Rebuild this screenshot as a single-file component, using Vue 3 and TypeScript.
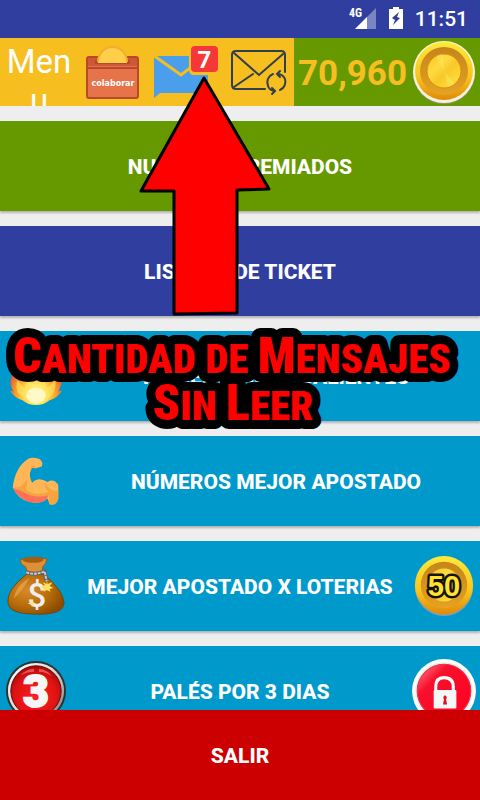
<script setup lang="ts">
interface Entry {
  label: string
  tone: 'green' | 'indigo' | 'blue'
  left?: 'fire' | 'arm' | 'bag' | 'three'
  right?: 'fifty' | 'lock'
}

const entries: Entry[] = [
  { label: 'NUMEROS PREMIADOS', tone: 'green' },
  { label: 'LISTADO DE TICKET', tone: 'indigo' },
  { label: 'NÚMEROS MÁS CALIENTES', tone: 'blue', left: 'fire' },
  { label: 'NÚMEROS MEJOR APOSTADO', tone: 'blue', left: 'arm' },
  { label: 'MEJOR APOSTADO X LOTERIAS', tone: 'blue', left: 'bag', right: 'fifty' },
  { label: 'PALÉS POR 3 DIAS', tone: 'blue', left: 'three', right: 'lock' },
]

const unread = 7
const coins = '70,960'
</script>

<template>
  <div class="screen">
    <svg class="defs" aria-hidden="true">
      <defs>
        <linearGradient id="rim" x1="0" y1="0" x2="0" y2="1">
          <stop offset="0" stop-color="#ffe93a" /><stop offset=".6" stop-color="#f8c51c" /><stop offset="1" stop-color="#e08a08" />
        </linearGradient>
        <linearGradient id="groove" x1="0" y1="0" x2="0" y2="1">
          <stop offset="0" stop-color="#c5851a" /><stop offset="1" stop-color="#e6a222" />
        </linearGradient>
        <linearGradient id="face" x1="0" y1="0" x2="1" y2="1">
          <stop offset="0" stop-color="#f8c322" /><stop offset=".35" stop-color="#ffdb40" /><stop offset=".55" stop-color="#f7c828" /><stop offset=".8" stop-color="#ffd938" /><stop offset="1" stop-color="#f3b61c" />
        </linearGradient>
        <radialGradient id="flame" cx=".5" cy=".82" r=".6">
          <stop offset="0" stop-color="#fffde0" /><stop offset=".25" stop-color="#fff07a" /><stop offset=".55" stop-color="#fdb52e" /><stop offset="1" stop-color="#e8492a" />
        </radialGradient>
        <radialGradient id="leather" cx=".35" cy=".4" r=".7">
          <stop offset="0" stop-color="#d98a2c" /><stop offset=".55" stop-color="#b86e0a" /><stop offset="1" stop-color="#8a4a00" />
        </radialGradient>
        <radialGradient id="ruby" cx=".5" cy=".6" r=".6">
          <stop offset="0" stop-color="#ff2020" /><stop offset=".7" stop-color="#e01212" /><stop offset="1" stop-color="#a80808" />
        </radialGradient>
        <linearGradient id="steel" x1="0" y1="0" x2="1" y2="1">
          <stop offset="0" stop-color="#ffffff" /><stop offset=".5" stop-color="#d8d8d8" /><stop offset="1" stop-color="#777777" />
        </linearGradient>
        <linearGradient id="cherry" x1="0" y1="0" x2="1" y2="1">
          <stop offset="0" stop-color="#ff8a96" /><stop offset=".3" stop-color="#f8102c" /><stop offset="1" stop-color="#ff0020" />
        </linearGradient>
      </defs>
    </svg>

    <div class="status">
      <svg class="signal" viewBox="0 0 28 24" aria-hidden="true">
        <path d="M27 3V24H6Z" fill="#7c85c3" />
        <path d="M18 12V24H6Z" fill="#fff" />
        <text x="0" y="12" class="network">4G</text>
      </svg>
      <svg class="battery" viewBox="0 0 14 22" aria-hidden="true">
        <path d="M4 0H10V2H14V22H0V2H4Z" fill="#fff" />
        <path d="M10 5L3 11L6 13L4 18L11 11L8 10Z" fill="#303f9f" />
      </svg>
      <time class="clock">11:51</time>
    </div>

    <header class="bar">
      <button class="menu" type="button">Menu</button>
      <button class="tool" type="button" aria-label="colaborar">
        <svg viewBox="0 1 60 56" class="toolicon">
          <rect x="4" y="14" width="51" height="41" rx="2" fill="#e67349" stroke="#b7492b" stroke-width="2" />
          <path d="M5 15H54V23H5Z" fill="#cf5638" />
          <path d="M4 25H55" stroke="#b7492b" stroke-width="2" />
          <path d="M13 17V20H46V17" fill="none" stroke="#b7492b" stroke-width="2" />
          <path d="M15 20A14.500 16 0 0 1 44 20Z" fill="#ffce4b" />
          <path d="M15 19A14.500 15 0 0 1 44 19" fill="none" stroke="#f2ae2b" stroke-width="2" />
          <text x="30" y="43" class="collab">colaborar</text>
        </svg>
      </button>
      <button class="tool wide" type="button" aria-label="Mensajes sin leer">
        <svg viewBox="0 0 70 60" class="mail">
          <path d="M3 14H57V51H9L3 56Z" fill="#4a9eeb" />
          <path d="M2 13L30 33L47 20" fill="none" stroke="#f7be20" stroke-width="3" />
          <path d="M38 8H70V33H43Q38 33 38 28Z" fill="#f7be20" />
        </svg>
        <span class="badge">{{ unread }}</span>
      </button>
      <button class="tool" type="button" aria-label="Actualizar mensajes">
        <svg viewBox="0 0 60 50" class="toolicon" fill="none" stroke="#2f3f4d" stroke-width="2" stroke-linecap="round">
          <path d="M56 25V8Q56 4 52 4H7Q3 4 3 8V38Q3 42 7 42H36" />
          <path d="M5 6L30 28L54 7M5 40L24 27" />
          <path d="M44 27A9 9 0 0 0 39 39Q41 44 46 44M43 41L46 44L43 47" />
          <path d="M51 43A9 9 0 0 0 56 32Q54 27 48 27M51 24L48 27L51 30" />
        </svg>
      </button>
      <div class="score">
        <span class="coins">{{ coins }}</span>
        <svg class="coin" viewBox="0 0 64 64" aria-hidden="true">
          <circle cx="32" cy="33" r="31" fill="#9b9270" />
          <circle cx="32" cy="32" r="31" fill="#f5f2df" />
          <circle cx="32" cy="31" r="29" fill="url(#rim)" />
          <circle cx="32" cy="31" r="24" fill="url(#groove)" />
          <circle cx="32" cy="31" r="17" fill="url(#face)" stroke="#d58d12" />
          <path d="M32 31L24 16A17 17 0 0 1 31 14ZM32 31L43 44A17 17 0 0 1 36 47Z" fill="#fff07a" opacity=".3" />
        </svg>
      </div>
    </header>

    <main class="list">
      <button v-for="e in entries" :key="e.label" type="button" class="entry" :class="e.tone">
        <span v-if="e.left" class="side">
          <svg v-if="e.left === 'fire'" viewBox="0 0 64 64">
            <path d="M30 3Q42 14 42 24Q46 20 46 14Q60 28 59 36Q58 43 55 48L59 47Q54 55 46 57Q40 62 32 62Q24 62 18 57Q10 55 5 47L9 48Q5 43 6 36Q8 24 16 18Q17 26 22 26Q28 18 30 3Z" fill="url(#flame)" />
            <path d="M14 50Q10 43 13 36L20 45L24 34L31 44L40 33L43 44L52 37Q53 44 49 51Q42 60 32 60Q21 60 14 50Z" fill="#ffe760" opacity=".6" />
            <ellipse cx="32" cy="52" rx="10" ry="8" fill="#fffde6" opacity=".7" />
          </svg>
          <svg v-else-if="e.left === 'arm'" viewBox="0 0 64 64">
            <path d="M24 9Q28 7 35 9Q40 12 38 17L31 19Q28 17 27 20Q24 26 28 34Q34 27 44 33Q50 29 55 36V50Q53 58 46 56L44 50Q35 57 24 53Q14 51 8 39Q10 18 24 9Z" fill="#ffb657" />
            <path d="M8 39Q17 42 24 45Q36 50 45 46L43 51Q34 57 23 53Q13 49 8 39Z" fill="#ff7058" />
            <path d="M8 38Q16 41 22 31Q24 37 21 40Q31 49 45 43Q40 38 41 33Q47 44 55 42V50Q53 58 46 56L45 47Q30 50 22 45Z" fill="#f5a440" />
            <path d="M27 20Q29 15 31 18" fill="none" stroke="#e98c2e" />
          </svg>
          <svg v-else-if="e.left === 'bag'" viewBox="0 0 64 64">
            <path d="M22 20Q2 36 3 48Q3 61 31 61Q61 62 61 49Q59 35 40 20Z" fill="url(#leather)" stroke="#7b4302" />
            <path d="M16 5Q27 0 43 4Q43 9 39 12L38 19H24L21 12Q16 10 16 5Z" fill="#dd9134" stroke="#9a5a0c" />
            <ellipse cx="29" cy="5" rx="11" ry="3" fill="#a55d12" />
            <path d="M20 27Q11 34 9 45Q19 36 25 24Z" fill="#eaa64c" opacity=".7" />
            <path d="M22 18Q31 21 41 17L43 27" fill="none" stroke="#5d6672" stroke-width="4" />
            <path d="M22 18Q31 21 41 17L43 27" fill="none" stroke="#c7cbd0" stroke-width="2" stroke-dasharray="3 1" />
            <text x="33" y="54" class="dollar">$</text>
            <path d="M43 26L44 30L49 28L46 32L50 34L46 35L47 38L43 36L40 38L40 35L37 33L41 31L39 28L43 30Z" fill="#ffe060" />
            <path d="M28 46L29 49L32 50L29 51L28 54L27 51L23 50L27 49Z" fill="#ffe87a" />
          </svg>
          <svg v-else viewBox="0 0 64 64">
            <circle cx="32" cy="32" r="31" fill="#30302f" />
            <circle cx="32" cy="32" r="29" fill="url(#steel)" />
            <circle cx="32" cy="32" r="26" fill="url(#ruby)" stroke="#541010" />
            <path d="M16 16Q22 9 30 9V12Q22 12 16 16ZM35 9Q44 10 49 17Q42 12 35 12Z" fill="#ff8080" opacity=".6" />
            <text x="32" y="48" class="three">3</text>
          </svg>
        </span>
        <span class="label">{{ e.label }}</span>
        <span v-if="e.right" class="side">
          <svg v-if="e.right === 'fifty'" viewBox="0 0 64 64">
            <circle cx="32" cy="33" r="30" fill="#8f9a9f" />
            <circle cx="32" cy="31" r="30" fill="url(#rim)" />
            <circle cx="32" cy="31" r="24" fill="url(#groove)" />
            <circle cx="32" cy="31" r="17" fill="url(#face)" />
            <text x="32" y="42" class="fifty">50</text>
          </svg>
          <svg v-else viewBox="0 0 64 64" class="big">
            <circle cx="32" cy="32" r="31" fill="#fff" />
            <circle cx="32" cy="32" r="28" fill="#dff1f2" />
            <circle cx="32" cy="32" r="26" fill="url(#cherry)" stroke="#ef3048" />
            <path d="M24 31V28Q24 19 32 19Q41 19 41 28V31" fill="none" stroke="#fff" stroke-width="3" />
            <rect x="22" y="31" width="22" height="18" rx="1" fill="#f6f8f8" />
            <path d="M33 36A2.500 2.500 0 0 1 34 40L35 45H31L32 40A2.500 2.500 0 0 1 33 36Z" fill="#e01028" />
          </svg>
        </span>
      </button>
    </main>

    <button class="exit" type="button">SALIR</button>

    <svg class="callout" viewBox="0 0 480 440">
      <path d="M204 78L269 189L237 190V313L174 314V191L141 191Z" fill="#f00" stroke="#000" stroke-width="3" stroke-linejoin="round" />
      <use href="#caption" class="outline" />
      <g id="caption">
        <text x="232" y="373" class="caption"><tspan class="cap">C</tspan>ANTIDAD DE <tspan class="cap">M</tspan>ENSAJES</text>
        <text x="233" y="420" class="caption"><tspan class="cap">S</tspan>IN <tspan class="cap">L</tspan>EER</text>
      </g>
    </svg>
  </div>
</template>

<style>
body {
  margin: 0;
}
</style>

<style scoped>
.screen {
  position: relative;
  display: flex;
  flex-direction: column;
  height: 100vh;
  overflow: hidden;
  background: #eee;
  font-family: Roboto, "Liberation Sans", sans-serif;
}
.defs {
  position: absolute;
  width: 0;
  height: 0;
}
button {
  border: 0;
  margin: 0;
  padding: 0;
  background: none;
  font-family: inherit;
  color: #fff;
}
svg {
  display: block;
}
.status {
  flex: none;
  display: flex;
  align-items: center;
  justify-content: flex-end;
  height: 38px;
  padding: 0 12px;
  background: #303f9f;
  color: #fff;
}
.signal {
  width: 28px;
  height: 24px;
  margin-right: 12px;
  margin-bottom: 4px;
}
.network {
  font: 700 12px "Roboto Condensed", Roboto, sans-serif;
  fill: #fff;
}
.battery {
  width: 14px;
  height: 22px;
  margin-right: 12px;
  margin-bottom: 2px;
}
.clock {
  font-size: 21px;
  font-weight: 500;
  line-height: 40px;
}
.bar {
  flex: none;
  display: flex;
  height: 68px;
  background: #f7be20;
}
.menu {
  flex: none;
  width: 78px;
  padding: 4px;
  overflow: hidden;
  display: flex;
  align-items: flex-start;
  justify-content: center;
  font-size: 33px;
  line-height: 39px;
  word-break: break-all;
}
.tool {
  flex: 1 1 70px;
  position: relative;
  display: flex;
  align-items: center;
  justify-content: center;
}
.tool.wide {
  flex-basis: 76px;
}
.toolicon {
  width: 60px;
  height: 56px;
}
.collab {
  font: 700 8px "DejaVu Sans", sans-serif;
  fill: #fff;
  text-anchor: middle;
}
.mail {
  width: 70px;
  height: 60px;
}
.badge {
  position: absolute;
  top: 8px;
  right: 6px;
  width: 27px;
  height: 26px;
  border-radius: 4px;
  background: #f73838;
  font-size: 24px;
  font-weight: 700;
  line-height: 28px;
  text-align: center;
}
.score {
  flex: none;
  display: flex;
  align-items: center;
  justify-content: space-between;
  width: 186px;
  padding: 0 4px;
  box-sizing: border-box;
  background: #690;
}
.coins {
  color: #f7be20;
  font-size: 35px;
  font-weight: 700;
  padding-top: 2px;
}
.coin {
  width: 64px;
  height: 64px;
}
.list {
  flex: 1;
  min-height: 0;
  display: flex;
  flex-direction: column;
  gap: 15px;
  padding-top: 15px;
  overflow: hidden;
}
.entry {
  flex: none;
  display: flex;
  align-items: center;
  height: 90px;
  box-shadow: 0 2px 2px rgba(0, 0, 0, 0.25);
  font-size: 21px;
  font-weight: 800;
}
.green {
  background: #690;
}
.indigo {
  background: #303f9f;
}
.blue {
  background: #09c;
}
.label {
  flex: 1;
  padding-top: 2px;
  text-align: center;
}
.side {
  flex: none;
  display: flex;
  align-items: center;
  justify-content: center;
  width: 72px;
}
.side svg {
  width: 62px;
  height: 62px;
}
.side .big {
  width: 66px;
  height: 66px;
}
.dollar {
  font: 500 34px Roboto, sans-serif;
  fill: #eee;
  text-anchor: middle;
}
.three {
  font: 900 46px Roboto, sans-serif;
  fill: #f6f6f6;
  stroke: #f6f6f6;
  stroke-width: 2px;
  text-anchor: middle;
}
.fifty {
  font: 700 30px "Liberation Sans", sans-serif;
  fill: #ffe234;
  stroke: #161204;
  stroke-width: 5px;
  stroke-linejoin: round;
  paint-order: stroke;
  text-anchor: middle;
}
.exit {
  flex: none;
  height: 90px;
  padding-top: 2px;
  background: #c00;
  font-size: 21px;
  font-weight: 800;
}
.callout {
  position: absolute;
  top: 0;
  left: 0;
  width: 480px;
  height: 440px;
  pointer-events: none;
}
.caption {
  font-family: "Roboto Condensed", Roboto, sans-serif;
  font-size: 41px;
  font-weight: 900;
  text-anchor: middle;
}
.cap {
  font-size: 50px;
}
.outline {
  fill: #000;
  stroke: #000;
  stroke-width: 18px;
  stroke-linejoin: round;
}
#caption {
  fill: #f00;
}
</style>
